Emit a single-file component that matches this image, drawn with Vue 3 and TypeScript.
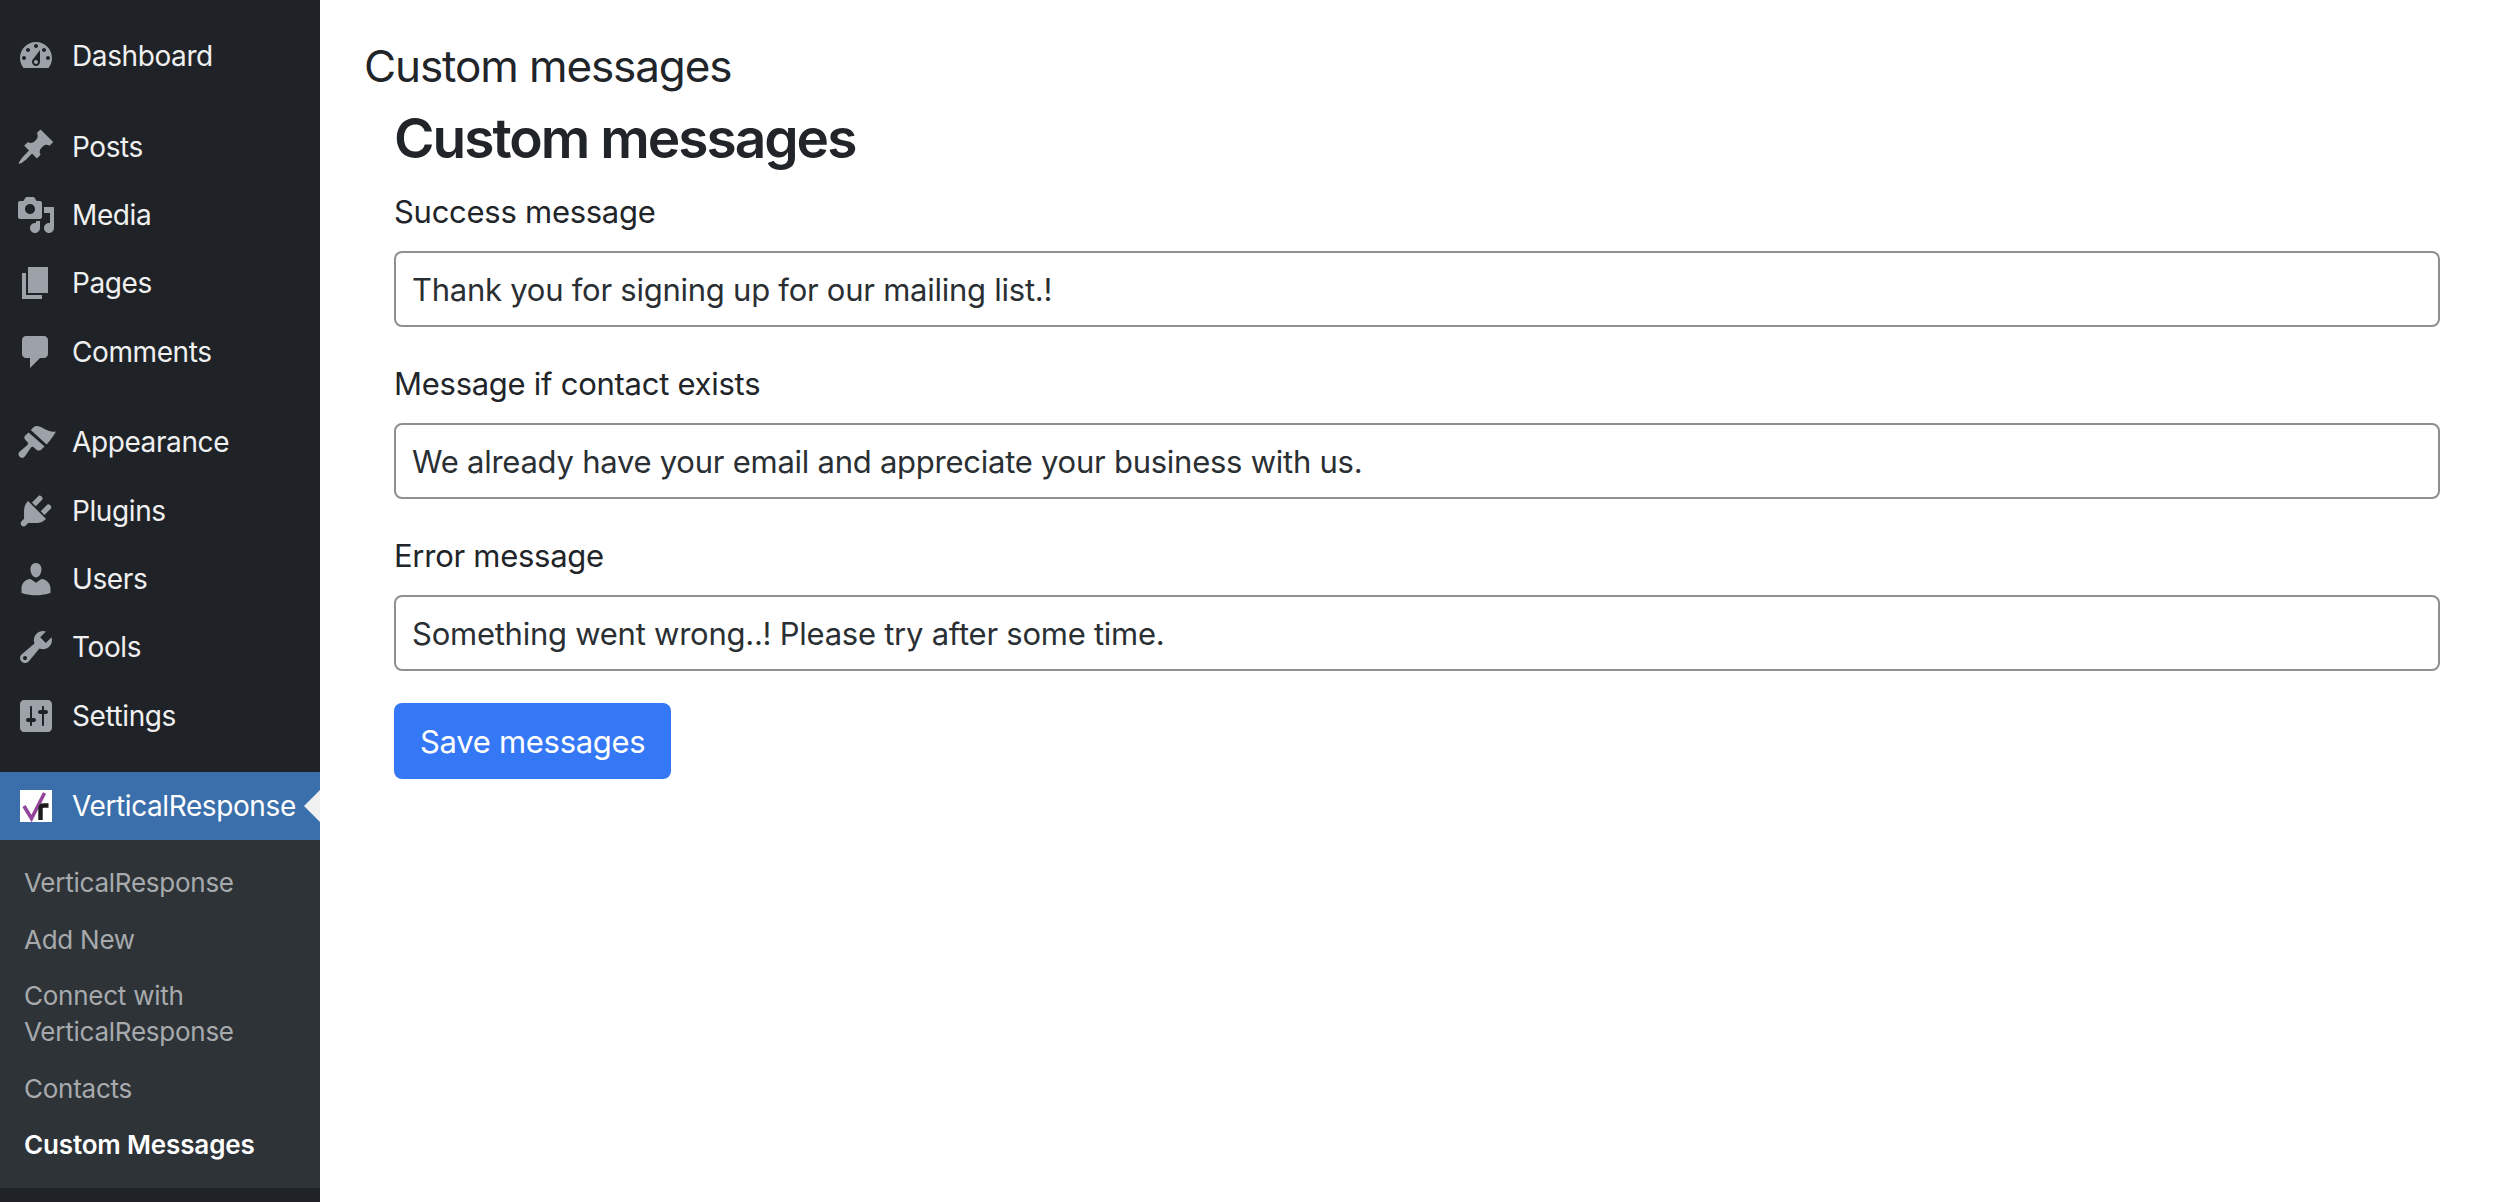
<script setup lang="ts">
import { ref } from 'vue';

interface MenuItem {
  label: string;
  icon: string;
  gap?: boolean;
}

// dashicons paths, 20x20 box
const menu: MenuItem[] = [
  { label: 'Dashboard', icon: 'M3.76 16h12.48c1.1-1.37 1.76-3.11 1.76-5 0-4.42-3.58-8-8-8s-8 3.58-8 8c0 1.89.66 3.63 1.76 5zM10 4c.55 0 1 .45 1 1s-.45 1-1 1-1-.45-1-1 .45-1 1-1zM6 6c.55 0 1 .45 1 1s-.45 1-1 1-1-.45-1-1 .45-1 1-1zm8 0c.55 0 1 .45 1 1s-.45 1-1 1-1-.45-1-1 .45-1 1-1zm-5.37 5.55L12 7v6c0 1.1-.9 2-2 2s-2-.9-2-2c0-.57.24-1.08.63-1.45zM4 10c.55 0 1 .45 1 1s-.45 1-1 1-1-.45-1-1 .45-1 1-1zm12 0c.55 0 1 .45 1 1s-.45 1-1 1-1-.45-1-1 .45-1 1-1zm-5 3c0-.55-.45-1-1-1s-1 .45-1 1 .45 1 1 1 1-.45 1-1z' },
  { label: 'Posts', gap: true, icon: 'M10.44 3.02l1.82-1.82 6.36 6.35-1.83 1.82c-1.05-.68-2.48-.57-3.41.36l-.75.75c-.92.93-1.04 2.35-.35 3.41l-1.83 1.82-2.41-2.41-2.8 2.79c-.42.42-3.38 2.71-3.8 2.29s1.86-3.39 2.28-3.81l2.79-2.79L4.1 9.36l1.83-1.82c1.05.69 2.48.57 3.4-.36l.75-.75c.93-.92 1.05-2.35.36-3.41z' },
  { label: 'Media', icon: 'M13 11V4c0-.55-.45-1-1-1h-1.67L9 1H5L3.67 3H2c-.55 0-1 .45-1 1v7c0 .55.45 1 1 1h10c.55 0 1-.45 1-1zM7 4.5c1.38 0 2.5 1.12 2.5 2.5S8.38 9.5 7 9.5 4.5 8.38 4.5 7 5.62 4.5 7 4.5zM14 6h5v10.5c0 1.38-1.12 2.5-2.5 2.5S14 17.88 14 16.5s1.12-2.5 2.5-2.5c.17 0 .34.02.5.05V9h-3V6zm-4 8.05V13h2v3.5c0 1.38-1.12 2.5-2.5 2.5S7 17.88 7 16.5 8.12 14 9.5 14c.17 0 .34.02.5.05z' },
  { label: 'Pages', icon: 'M6 15V2h10v13H6zm-1 1h8v2H3V5h2v11z' },
  { label: 'Comments', icon: 'M5 2h9c1.1 0 2 .9 2 2v7c0 1.1-.9 2-2 2h-2l-5 5v-5H5c-1.1 0-2-.9-2-2V4c0-1.1.9-2 2-2z' },
  { label: 'Appearance', gap: true, icon: 'M7.4 4L9 2.4C10 1.6 11.5 2 13 2.8C15 3.9 17 5.4 20 4.8C18.8 7 17.2 9.2 15.3 11.3zM6.3 5.2L14.3 12.2L12.4 14C11.5 14.6 10.6 14.2 9.8 13.5L8.8 12.6C8.3 12.2 7.8 12.3 7.4 12.9L4.6 17C3.8 18.2 2.6 18.2 1.8 17.4C1 16.6 1 15.6 1.9 14.8L5.6 11.6C6.2 11 6.2 10.5 5.7 10L4.7 9C4 8.2 4 7.4 4.6 6.8z' },
  { label: 'Plugins', icon: 'M13.11 4.36L9.87 7.6 8 5.73l3.24-3.24c.35-.34 1.05-.2 1.56.32.52.51.66 1.21.31 1.55zm-8 1.77l.91-1.12 9.01 9.01-1.19.84c-.71.71-2.63 1.16-3.82 1.16H6.14L4.9 17.26c-.59.59-1.54.59-2.12 0-.59-.58-.59-1.53 0-2.12l1.24-1.24v-3.88c0-1.13.4-3.19 1.09-3.89zm7.26 3.97l3.24-3.24c.34-.35 1.04-.21 1.55.31.52.51.66 1.21.31 1.55l-3.24 3.25z' },
  { label: 'Users', icon: 'M10 9.25c-2.27 0-2.73-3.44-2.73-3.44C7 4.02 7.82 2 9.97 2c2.16 0 2.98 2.02 2.71 3.81 0 0-.41 3.44-2.68 3.44zm0 2.57L12.72 10c2.39 0 4.52 2.33 4.52 4.53v2.49s-3.65 1.13-7.24 1.13c-3.65 0-7.24-1.13-7.24-1.13v-2.49c0-2.25 1.94-4.48 4.47-4.48z' },
  { label: 'Tools', icon: 'M16.68 9.77c-1.34 1.34-3.3 1.67-4.95.99l-5.41 6.52c-.99.99-2.59.99-3.58 0s-.99-2.59 0-3.57l6.52-5.42c-.68-1.65-.35-3.61.99-4.95 1.28-1.28 3.12-1.62 4.72-1.06l-2.89 2.89 2.82 2.82 2.86-2.87c.53 1.58.18 3.39-1.08 4.65zM3.81 16.21c.4.39 1.04.39 1.43 0 .4-.4.4-1.04 0-1.43-.39-.4-1.03-.4-1.43 0-.39.39-.39 1.03 0 1.43z' },
  { label: 'Settings', icon: 'M18 16V4c0-1.1-.9-2-2-2H4c-1.1 0-2 .9-2 2v12c0 1.1.9 2 2 2h12c1.1 0 2-.9 2-2zM8 11h1c.55 0 1 .45 1 1s-.45 1-1 1H8v1.5c0 .28-.22.5-.5.5s-.5-.22-.5-.5V13H6c-.55 0-1-.45-1-1s.45-1 1-1h1V5.5c0-.28.22-.5.5-.5s.5.22.5.5V11zm5-2h-1c-.55 0-1-.45-1-1s.45-1 1-1h1V5.5c0-.28.22-.5.5-.5s.5.22.5.5V7h1c.55 0 1 .45 1 1s-.45 1-1 1h-1v5.5c0 .28-.22.5-.5.5s-.5-.22-.5-.5V9z' },
];

const submenu = ['VerticalResponse', 'Add New', 'Connect with VerticalResponse', 'Contacts', 'Custom Messages'];

const fields = ref([
  { label: 'Success message', value: 'Thank you for signing up for our mailing list.!' },
  { label: 'Message if contact exists', value: 'We already have your email and appreciate your business with us.' },
  { label: 'Error message', value: 'Something went wrong..! Please try after some time.' },
]);
</script>

<template>
  <div class="page">
    <aside class="sidebar">
      <ul class="menu">
        <li v-for="item in menu" :key="item.label" class="menu-item" :class="{ gap: item.gap }">
          <svg class="icon" viewBox="0 0 20 20"><path :d="item.icon" /></svg>
          <span>{{ item.label }}</span>
        </li>
      </ul>
      <div class="menu-item active">
        <svg class="logo" viewBox="0 0 32 32">
          <defs>
            <filter id="soft"><feGaussianBlur stdDeviation="0.6" /></filter>
          </defs>
          <rect width="32" height="32" fill="#fff" />
          <g fill="none" filter="url(#soft)">
            <path d="M4 16l7.5 12.5L24.5 3" stroke="#93459b" stroke-width="3.6" />
            <path d="M20.5 30V18.5c0-2 1.5-3 3.5-3h4.5" stroke="#1c1c1c" stroke-width="4.4" />
          </g>
        </svg>
        <span>VerticalResponse</span>
      </div>
      <ul class="submenu">
        <li
          v-for="(sub, i) in submenu"
          :key="sub"
          :class="{ current: i === submenu.length - 1 }"
        >{{ sub }}</li>
      </ul>
    </aside>

    <main class="content">
      <h1>Custom messages</h1>
      <form class="form" @submit.prevent>
        <h2>Custom messages</h2>
        <div v-for="field in fields" :key="field.label" class="field">
          <label>{{ field.label }}</label>
          <input v-model="field.value" type="text" />
        </div>
        <button type="submit">Save messages</button>
      </form>
    </main>
  </div>
</template>

<style>
body {
  margin: 0;
  background: #fff;
}
</style>

<style scoped>
.page {
  display: flex;
  height: 1202px;
  overflow: hidden;
  font-family: Inter, 'Noto Sans', sans-serif;
  color: #212529;
}

.sidebar {
  width: 320px;
  flex-shrink: 0;
  background: #1f2327;
  padding-top: 22px;
  box-sizing: border-box;
}

ul {
  list-style: none;
  margin: 0;
  padding: 0;
}

.menu-item {
  position: relative;
  display: flex;
  align-items: center;
  height: 68.4px;
  padding-left: 16px;
  font-size: 28px;
  letter-spacing: -0.4px;
  color: #f0f0f1;
}

.menu-item.gap {
  margin-top: 22px;
}

.icon {
  width: 40px;
  height: 40px;
  margin-right: 16px;
  fill: #9ca2a7;
}

.menu-item.active {
  margin-top: 22px;
  height: 68px;
  padding-left: 20px;
  background: #3b6fab;
  color: #fff;
}

.active::after {
  content: '';
  position: absolute;
  right: 0;
  top: 18px;
  border: 16px solid transparent;
  border-left-width: 0;
  border-right-color: #f0f0f1;
}

.logo {
  width: 32px;
  height: 32px;
  margin-right: 20px;
}

.submenu {
  background: #2e3338;
  padding: 15px 0;
}

.submenu li {
  padding: 10.25px 24px;
  font-size: 26px;
  line-height: 36px;
  letter-spacing: -0.25px;
  color: #a7aaad;
}

.submenu li.current {
  color: #fff;
  font-weight: 600;
  letter-spacing: -0.15px;
}

.content {
  flex: 1;
  padding: 0 64px 0 44px;
}

h1 {
  margin: 0;
  padding-top: 40px;
  font-size: 44px;
  line-height: 52px;
  letter-spacing: -1.1px;
  font-weight: 400;
}

.form {
  padding-left: 30px;
}

h2 {
  margin: 14px 0 17.5px;
  font-size: 55px;
  line-height: 64px;
  letter-spacing: -2px;
  font-weight: 600;
}

.field {
  margin-bottom: 32.5px;
}

.field:last-of-type {
  margin-bottom: 32px;
}

label {
  display: block;
  margin-bottom: 15.5px;
  font-size: 31px;
  line-height: 48px;
  letter-spacing: -0.27px;
}

input {
  display: block;
  width: 100%;
  height: 76px;
  box-sizing: border-box;
  padding: 0 16px;
  border: 2px solid #8e8e93;
  border-radius: 8px;
  font-family: inherit;
  font-size: 31px;
  letter-spacing: -0.25px;
  color: #2a2f33;
  background: #fff;
  outline: none;
}

button {
  height: 76px;
  padding: 0 26px;
  border: none;
  border-radius: 8px;
  background: #3578f6;
  color: #fff;
  font-family: inherit;
  font-size: 31px;
  letter-spacing: -0.3px;
}
</style>
